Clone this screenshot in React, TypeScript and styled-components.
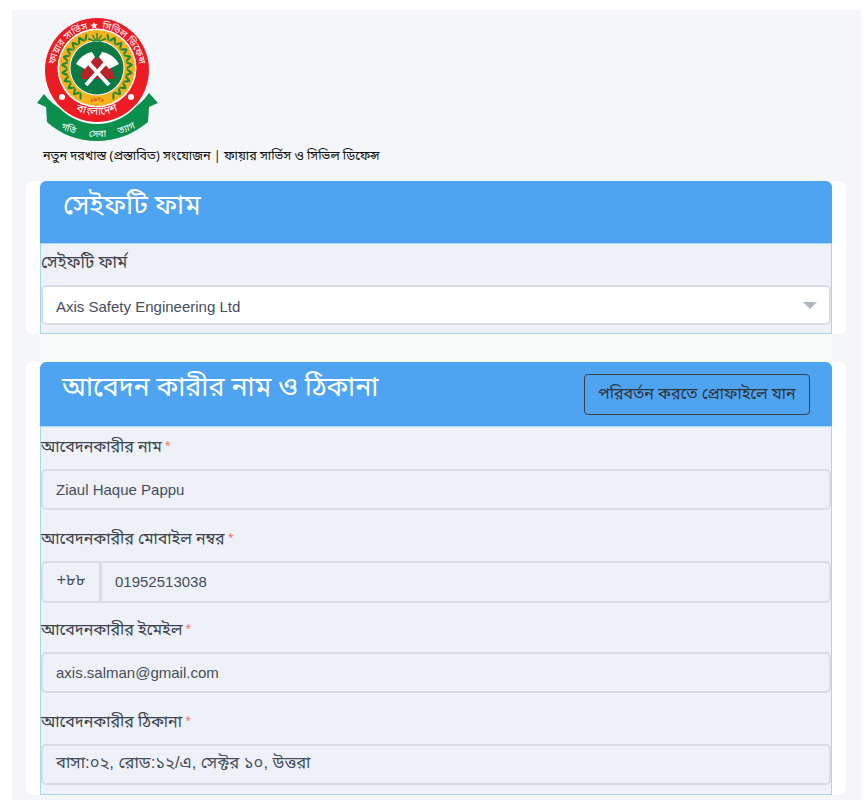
import styled, { createGlobalStyle } from "styled-components";

const GlobalStyle = createGlobalStyle`
    html, body {
        margin: 0;
        padding: 0;
        background: #ffffff;
        height: 800px;
        overflow: hidden;
    }
    body {
        font-family: "Noto Sans Bengali", "Lohit Bengali", "Noto Sans", "Liberation Sans", sans-serif;
    }
`;

const Page = styled.div`
    margin: 10px 5px 0 12px;
    padding: 10px 15px 0 14px;
    height: 790px;
    box-sizing: border-box;
    background: #f5f6fa;
`;

const Brand = styled.div`
    display: flex;
    flex-direction: column;
    height: 161px;
    padding-left: 10px;
`;

const LogoBox = styled.svg`
    display: block;
    width: 124px;
    height: 126px;
    margin-top: -2px;
    font-family: "Noto Sans Bengali", "Lohit Bengali", sans-serif;
`;

const BrandTitle = styled.div`
    margin: 3px 0 0 7px;
    font-size: 12.6px;
    line-height: 20px;
    color: #111111;
    white-space: nowrap;
`;

const Card = styled.section<{ $height: number }>`
    height: ${({ $height }) => $height}px;
    padding: 0 14px;
    background: #ffffff;
    border-radius: 6px;
    display: flex;
    flex-direction: column;
`;

const CardGap = styled.div`
    height: 28px;
    margin: 0 14px;
    background: #fafbfb;
`;

const CardHeader = styled.header<{ $height: number }>`
    flex: 0 0 ${({ $height }) => $height}px;
    display: flex;
    justify-content: space-between;
    box-sizing: border-box;
    background: #4ea4f1;
    border-radius: 6px 6px 0 0;
    border-bottom: 1px solid #a5d8ec;
`;

const CardTitle = styled.h2<{ $left: number; $top: number }>`
    margin: ${({ $top }) => $top}px 0 0 ${({ $left }) => $left}px;
    font-size: 26.8px;
    line-height: 36px;
    font-weight: 400;
    color: #ffffff;
`;

const ProfileButton = styled.button`
    align-self: flex-start;
    width: 226px;
    height: 41px;
    margin: 12px 22px 0 0;
    padding: 0;
    background: transparent;
    border: 1px solid #3a3f47;
    border-radius: 4px;
    font-family: inherit;
    font-size: 16px;
    color: #2f343c;
`;

const CardBody = styled.div`
    flex: 1;
    display: flex;
    flex-direction: column;
    background: #eef1f7;
    border: 1px solid #a5d8ec;
    border-top: 0;
`;

const Field = styled.div`
    height: 91.6px;
    flex: none;
    &:last-child {
        height: auto;
    }
`;

const FieldLabel = styled.label<{ $large?: boolean }>`
    display: block;
    height: ${({ $large }) => ($large ? 41 : 42)}px;
    font-size: ${({ $large }) => ($large ? 16.8 : 16)}px;
    line-height: ${({ $large }) => ($large ? 41 : 39)}px;
    color: #3d4450;
`;

const Required = styled.span`
    margin-left: 3px;
    font-size: 11px;
    color: #f27474;
    vertical-align: 3px;
`;

const ControlRow = styled.div<{ $height?: number; $white?: boolean; $bengali?: boolean }>`
    display: flex;
    align-items: center;
    justify-content: space-between;
    box-sizing: border-box;
    height: ${({ $height }) => $height ?? 41}px;
    padding: ${({ $white }) => ($white ? "2px 12px 0 13px" : "0 12px 1px 13px")};
    background: ${({ $white }) => ($white ? "#ffffff" : "#eef1f7")};
    border: 2px solid #d8dce3;
    border-radius: 5px;
    font-family: "Liberation Sans", "Noto Sans Bengali", sans-serif;
    font-size: ${({ $bengali }) => ($bengali ? 16.6 : 15)}px;
    color: #454e5d;
`;

const SelectCaret = styled.span`
    width: 0;
    height: 0;
    margin-top: -2px;
    border-left: 7px solid transparent;
    border-right: 7px solid transparent;
    border-top: 7px solid #adb5bd;
`;

const PhoneRow = styled.div`
    display: flex;
    height: 42px;
`;

const PhonePrefix = styled.div`
    display: flex;
    align-items: center;
    justify-content: center;
    box-sizing: border-box;
    width: 60px;
    padding-bottom: 1px;
    background: #eef1f7;
    border: 2px solid #d8dce3;
    border-radius: 5px 0 0 5px;
    font-family: "Liberation Sans", "Noto Sans Bengali", sans-serif;
    font-size: 16.5px;
    color: #454e5d;
`;

const PhoneInput = styled(ControlRow)`
    flex: 1;
    height: 42px;
    margin-left: -1px;
    border-radius: 0 5px 5px 0;
`;

const leafSteps = Array.from({ length: 10 }, (_, i) => 24 + i * 13.5);

const Logo = () => (
    <LogoBox viewBox="36 18 124 126" role="img" aria-label="Fire Service and Civil Defence">
        <defs>
            <path id="ringTop" d="M55.5 80 A42.5 42.5 0 1 1 138.5 80" />
            <path id="ringBottom" d="M62 103 Q97 127 132 103" />
            <path id="ribbon" d="M52 124 Q97 150 143 124" />
        </defs>
        <path d="M37 103 L44 94 Q60 116 97 118 Q134 116 149 93 L158 103 L149 107 L148 122 Q125 141 97 141 Q68 141 47 122 L46 107 Z" fill="#0b8f4d" />
        <circle cx="97" cy="72" r="52" fill="#ffffff" />
        <circle cx="97" cy="70" r="52" fill="#ed1c24" />
        <circle cx="97" cy="68" r="39.5" fill="#ffffff" />
        <circle cx="97" cy="68" r="38" fill="#f5b21a" />
        <circle cx="97" cy="68" r="27.5" fill="#ffffff" />
        <circle cx="97" cy="68" r="26.5" fill="#0b7a45" />
        {leafSteps.flatMap((step) => [step, -step]).map((angle) => (
            <g key={angle} transform={`rotate(${angle} 97 68)`}>
                <ellipse cx="94.6" cy="35.5" rx="1.1" ry="3.6" transform="rotate(-35 94.6 35.5)" fill="#1d8a3c" />
                <ellipse cx="99.4" cy="35.5" rx="1.1" ry="3.6" transform="rotate(35 99.4 35.5)" fill="#1d8a3c" />
            </g>
        ))}
        <path d="M97 33 V41 M92.5 35 L96 41 M101.5 35 L98 41 M88 38.5 L95 41.5 M106 38.5 L99 41.5" stroke="#1d8a3c" strokeWidth="1.4" />
        <path d="M81 79 C82 66 89 58 97 58 C105 58 112 66 115 79 Z" fill="#b8232a" />
        <path d="M86 85 L108 60 M109 85 L86 60" stroke="#ffffff" strokeWidth="4" />
        <path d="M76 64 C80 57 86 53 92 52 L95 57 L85 69 Z M119 64 C115 57 109 53 102 52 L99 57 L109 69 Z" fill="#ffffff" />
        <text x="97" y="101" fontSize="6" fill="#c9252b" textAnchor="middle">১৯৭১</text>
        <circle cx="62" cy="97" r="3" fill="#ffffff" />
        <circle cx="131" cy="97" r="3" fill="#ffffff" />
        <text fontSize="9.6" fill="#ffffff" textAnchor="middle">
            <textPath href="#ringTop" startOffset="50%">ফায়ার সার্ভিস ★ সিভিল ডিফেন্স</textPath>
        </text>
        <text fontSize="11" fill="#ffffff" textAnchor="middle">
            <textPath href="#ringBottom" startOffset="50%">বাংলাদেশ</textPath>
        </text>
        <text fontSize="9.5" fill="#ffffff" textAnchor="middle">
            <textPath href="#ribbon" startOffset="18%">গতি</textPath>
        </text>
        <text fontSize="9.5" fill="#ffffff" textAnchor="middle">
            <textPath href="#ribbon" startOffset="50%">সেবা</textPath>
        </text>
        <text fontSize="9.5" fill="#ffffff" textAnchor="middle">
            <textPath href="#ribbon" startOffset="82%">ত্যাগ</textPath>
        </text>
    </LogoBox>
);

const App = () => {
    return (
        <Page>
            <GlobalStyle />
            <Brand>
                <Logo />
                <BrandTitle>নতুন দরখাস্ত (প্রস্তাবিত) সংযোজন | ফায়ার সার্ভিস ও সিভিল ডিফেন্স</BrandTitle>
            </Brand>
            <Card $height={153}>
                <CardHeader $height={63}>
                    <CardTitle $left={23} $top={8}>সেইফটি ফাম</CardTitle>
                </CardHeader>
                <CardBody>
                    <Field>
                        <FieldLabel $large>সেইফটি ফার্ম</FieldLabel>
                        <ControlRow $white $height={40}>
                            Axis Safety Engineering Ltd
                            <SelectCaret />
                        </ControlRow>
                    </Field>
                </CardBody>
            </Card>
            <CardGap />
            <Card $height={433}>
                <CardHeader $height={65}>
                    <CardTitle $left={22} $top={9}>আবেদন কারীর নাম ও ঠিকানা</CardTitle>
                    <ProfileButton>পরিবর্তন করতে প্রোফাইলে যান</ProfileButton>
                </CardHeader>
                <CardBody>
                    <Field>
                        <FieldLabel>আবেদনকারীর নাম<Required>*</Required></FieldLabel>
                        <ControlRow>Ziaul Haque Pappu</ControlRow>
                    </Field>
                    <Field>
                        <FieldLabel>আবেদনকারীর মোবাইল নম্বর<Required>*</Required></FieldLabel>
                        <PhoneRow>
                            <PhonePrefix>+৮৮</PhonePrefix>
                            <PhoneInput>01952513038</PhoneInput>
                        </PhoneRow>
                    </Field>
                    <Field>
                        <FieldLabel>আবেদনকারীর ইমেইল<Required>*</Required></FieldLabel>
                        <ControlRow>axis.salman@gmail.com</ControlRow>
                    </Field>
                    <Field>
                        <FieldLabel>আবেদনকারীর ঠিকানা<Required>*</Required></FieldLabel>
                        <ControlRow $bengali>বাসা:০২, রোড:১২/এ, সেক্টর ১০, উত্তরা</ControlRow>
                    </Field>
                </CardBody>
            </Card>
        </Page>
    );
};

export default App;
